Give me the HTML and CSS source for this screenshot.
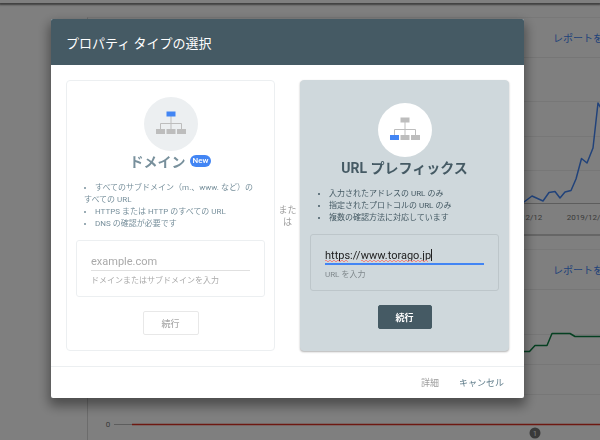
FILE: index.html
```html
<!DOCTYPE html>
<html lang="ja">
<head>
<meta charset="utf-8">
<title>プロパティ タイプの選択</title>
<link rel="stylesheet" href="styles.css">
</head>
<body>
<div class="page">
  <div class="topbar"></div>
  <main class="reports">
    <section class="report">
      <div class="report-head"><a class="report-link" href="#">レポートを開く</a></div>
      <svg class="chart" width="560" height="176" viewBox="0 0 560 176">
        <path class="grid" d="M26 43.500H560M26 78.500H560M26 112.500H560"/>
        <path class="axis" d="M26 145.500H560"/>
        <path class="line blue" d="M426 148L436 144L444 138L455 143L461 134.500L467 133.500L472 140L477 134L483 132.500L488 121L493.500 100.500L499 105L505 90L510 45L514 52"/>
        <text class="label" x="433" y="162" text-anchor="middle">2019/12/12</text>
        <text class="label" x="500" y="162" text-anchor="middle">2019/12/23</text>
      </svg>
    </section>
    <section class="report">
      <div class="report-head"><a class="report-link" href="#">レポートを開く</a></div>
      <svg class="chart" width="560" height="176" viewBox="0 0 560 176">
        <path class="grid" d="M26 44.500H560M26 74.500H560M26 104.500H560"/>
        <path class="axis" d="M26 134.500H46"/>
        <path class="line green" d="M426 61.500H441.500L447 55.500H459L464 43.500H482L487 46.500H560"/>
        <path class="line red" d="M44 134.500H560"/>
        <text class="label" x="20" y="137" text-anchor="middle">0</text>
        <circle class="marker" cx="447" cy="143" r="5.500"/>
        <text class="marker-label" x="447" y="145.500" text-anchor="middle">1</text>
      </svg>
    </section>
  </main>
</div>

<div class="scrim">
  <div class="dialog" role="dialog" aria-labelledby="dialog-title">
    <header class="dialog-head"><h1 id="dialog-title">プロパティ タイプの選択</h1></header>
    <div class="options">
      <section class="option">
        <svg class="badge" viewBox="0 0 54 54" aria-hidden="true">
          <circle class="disc" cx="27" cy="27" r="27"/>
          <path class="wire" d="M27 19V33M16.500 32V26.500H37.500V32"/>
          <path class="node active" d="M22.500 14.500h9v5h-9z"/>
          <path class="node" d="M12 32h9v5h-9zM22.500 32h9v5h-9zM33 32h9v5h-9z"/>
        </svg>
        <h2>ドメイン<span class="new">New</span></h2>
        <ul>
          <li>すべてのサブドメイン（m.、www. など）のすべての URL</li>
          <li>HTTPS または HTTP のすべての URL</li>
          <li>DNS の確認が必要です</li>
        </ul>
        <div class="field">
          <input id="domain" type="text" placeholder="example.com">
          <label for="domain">ドメインまたはサブドメインを入力</label>
        </div>
        <button class="continue" type="button">続行</button>
      </section>
      <p class="or">または</p>
      <section class="option selected">
        <svg class="badge" viewBox="0 0 54 54" aria-hidden="true">
          <circle class="disc" cx="27" cy="27" r="27"/>
          <path class="wire" d="M27 19V33M16.500 32V26.500H37.500V32"/>
          <path class="node" d="M22.500 14.500h9v5h-9zM22.500 32h9v5h-9zM33 32h9v5h-9z"/>
          <path class="node active" d="M12 32h9v5h-9z"/>
        </svg>
        <h2>URL プレフィックス</h2>
        <ul>
          <li>入力されたアドレスの URL のみ</li>
          <li>指定されたプロトコルの URL のみ</li>
          <li>複数の確認方法に対応しています</li>
        </ul>
        <div class="field">
          <div class="entry">
            <input id="prefix" type="text" value="https://www.torago.jp" spellcheck="false">
            <svg class="marks" width="110" height="16" viewBox="0 0 110 16" aria-hidden="true">
              <path class="typo" d="M0 14l1-1 2 2 2-2 2 2 2-2 2 2 2-2 2 2 2-2 2 2 2-2 2 2M36 14l1-1 2 2 2-2 2 2 2-2 2 2 2-2 2 2 2-2 2 2 2-2 2 2 2-2 2 2 2-2 2 2 2-2 2 2 2-2 2 2 2-2 2 2 2-2 2 2 2-2 2 2 2-2 2 2 2-2 2 2 2-2 2 2 2-2 2 2"/>
              <path class="caret" d="M106.500 2V14"/>
            </svg>
          </div>
          <label for="prefix">URL を入力</label>
        </div>
        <button class="continue" type="button">続行</button>
      </section>
    </div>
    <footer class="dialog-foot">
      <button class="details" type="button">詳細</button>
      <button type="button">キャンセル</button>
    </footer>
  </div>
</div>
</body>
</html>
```
FILE: styles.css
```css
* { box-sizing: border-box; }

body {
  margin: 0;
  overflow: hidden;
  background: #fff;
  font-family: Roboto, "Noto Sans CJK JP", sans-serif;
}

h1, h2, p, ul { margin: 0; padding: 0; }

button, input { font-family: inherit; }

/* Report page behind the dialog */
.page { height: 100vh; overflow: hidden; }

.topbar {
  height: 3px;
  background: #fff;
  box-shadow: 0 1px 2px 1px rgba(0, 0, 0, 0.5);
}

.reports {
  display: grid;
  gap: 13px;
  margin: 14px -40px 0 87px;
}

.report {
  border: 1px solid #f0f0f0;
  border-bottom: 2px solid #ccc;
  border-left-color: #d8d8d8;
}

.report-head {
  display: flex;
  align-items: center;
  justify-content: flex-end;
  height: 40px;
  padding-right: 16px;
  border-bottom: 1px solid #ececec;
}

.report-link {
  padding-right: 9px;
  color: #4285f4;
  font-size: 10px;
  text-decoration: none;
}

.chart { display: block; }
.grid { stroke: #eee; }
.axis { stroke: #bbb; stroke-width: 1; }
.line { fill: none; stroke-width: 1.5; stroke-linejoin: round; }
.blue { stroke: #4285f4; }
.green { stroke: #0b8043; }
.red { stroke: #db3022; }
.label { fill: #757575; font-size: 8px; }
.marker { fill: #757575; }
.marker-label { fill: #fff; font-size: 7px; }

/* Dialog */
.scrim {
  position: fixed;
  inset: 0;
  padding: 19px 76px 0 51px;
  background: rgba(0, 0, 0, 0.5);
}

.dialog {
  overflow: hidden;
  border-radius: 2px;
  background: #fff;
  box-shadow: 0 6px 12px 2px rgba(0, 0, 0, 0.4);
}

.dialog-head {
  display: flex;
  align-items: center;
  height: 46px;
  padding: 0 15px;
  background: #455a64;
  color: #fff;
}

.dialog-head h1 { font-size: 13px; font-weight: 400; }

.options {
  display: grid;
  grid-template-columns: 1fr 25px 1fr;
  padding: 15px;
}

.option {
  display: flex;
  flex-direction: column;
  align-items: center;
  padding: 16px 9px 15px;
  border: 1px solid #eceff1;
  border-radius: 4px;
  color: #78909c;
}

.option.selected {
  padding-top: 22px;
  border-color: #cfd8dc;
  background: #cfd8dc;
  box-shadow: 0 1px 2px rgba(0, 0, 0, 0.3);
  color: #455a64;
}

.badge { width: 54px; height: 54px; }
.disc { fill: #eceff1; }
.selected .disc { fill: #fff; }
.wire { fill: none; stroke: #bdbdbd; }
.node { fill: #bdbdbd; }
.node.active { fill: #4285f4; }

h2 {
  display: flex;
  align-items: center;
  gap: 4px;
  height: 20px;
  font-size: 14px;
  font-weight: 700;
  white-space: nowrap;
}

.new {
  padding: 0 3px;
  border-radius: 6px;
  background: #4285f4;
  color: #fff;
  font-size: 8px;
  font-weight: 500;
  line-height: 12px;
}

ul {
  align-self: stretch;
  margin: 11px 0 10px;
  padding: 0 8px;
  font-size: 8px;
  line-height: 12px;
  list-style: disc inside;
}

.field {
  align-self: stretch;
  padding: 12px 14px 9px;
  border: 1px solid #eceff1;
  border-radius: 3px;
}

.selected .field { border-color: #bdc6ca; }

.field input {
  display: block;
  width: 100%;
  height: 18px;
  padding: 0;
  border: 0;
  border-bottom: 1px solid #e0e0e0;
  outline: 0;
  background: none;
  color: #212121;
  font-size: 11px;
}

.field input::placeholder { color: #aaa; opacity: 1; }
.selected .field input { border-bottom: 2px solid #4285f4; }

.entry { position: relative; }
.marks { position: absolute; top: 0; left: 0; pointer-events: none; }
.typo { fill: none; stroke: #e88; }
.caret { stroke: #212121; }

.field label {
  display: block;
  margin-top: 4px;
  color: #aaa;
  font-size: 8px;
  line-height: 12px;
}

.selected .field label { color: #80898d; }

.continue {
  width: 56px;
  height: 24px;
  margin-top: 14px;
  padding: 0;
  border: 1px solid #e8e8e8;
  border-radius: 2px;
  background: #fff;
  color: #aaa;
  font-size: 9px;
  font-weight: 500;
}

.selected .continue {
  width: 54px;
  border-color: #455a64;
  background: #455a64;
  color: #fff;
  font-weight: 700;
}

.or {
  align-self: center;
  color: #9e9e9e;
  font-size: 9px;
  line-height: 12px;
  text-align: center;
}

.dialog-foot {
  display: flex;
  align-items: center;
  justify-content: flex-end;
  gap: 20px;
  height: 32px;
  padding: 0 20px;
  border-top: 1px solid #eceff1;
}

.dialog-foot button {
  padding: 0;
  border: 0;
  background: none;
  color: #607d8b;
  font-size: 9px;
}

.dialog-foot .details { color: #9e9e9e; }
```
